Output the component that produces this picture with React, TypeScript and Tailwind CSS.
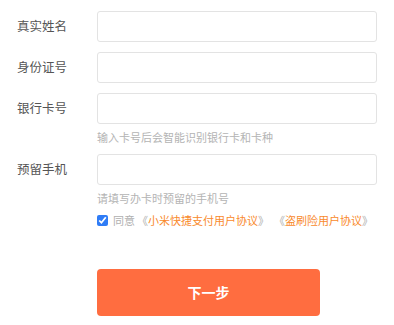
import { useState } from 'react';

const FONT = '"Noto Sans CJK SC", "Noto Sans", sans-serif';

interface FieldProps {
  label: string;
  hint?: string;
}

function Field({ label, hint }: FieldProps) {
  return (
    <div className="flex flex-col">
      <div className="flex items-center">
        <span className="w-[97px] shrink-0 pl-[17px] text-[12.5px] text-[#555]">{label}</span>
        <input className="h-[31px] w-[280px] rounded-[3px] border border-[#e3e3e3] bg-white outline-none" />
      </div>
      {hint && <p className="ml-[97px] mt-[5px] text-[11px] leading-[16px] text-[#b4b4b4]">{hint}</p>}
    </div>
  );
}

export default function App() {
  const [agreed, setAgreed] = useState(true);

  return (
    <div className="h-[325px] w-[394px] bg-white pt-[11px]" style={{ fontFamily: FONT }}>
      <div className="flex flex-col gap-[10px]">
        <Field label="真实姓名" />
        <Field label="身份证号" />
        <Field label="银行卡号" hint="输入卡号后会智能识别银行卡和卡种" />
      </div>
      <div className="mt-[9px]">
        <Field label="预留手机" hint="请填写办卡时预留的手机号" />
      </div>
      <label className="ml-[97px] mt-[6px] flex items-center text-[11px] leading-[16px] text-[#b0b0b0]">
        <input
          type="checkbox"
          checked={agreed}
          onChange={(e) => setAgreed(e.target.checked)}
          className="mr-[5px] h-[11px] w-[11px] accent-[#2f7cf6]"
        />
        <span>同意</span>
        <span className="ml-[2px]">《</span>
        <span className="text-[#f98a2c]">小米快捷支付用户协议</span>
        <span>》</span>
        <span className="ml-[5px]">《</span>
        <span className="text-[#f98a2c]">盗刷险用户协议</span>
        <span>》</span>
      </label>
      <button
        type="button"
        className="ml-[97px] mt-[41px] flex h-[47px] w-[223px] items-center justify-center rounded-[4px] bg-[#ff6d40] text-[14px] font-bold text-white"
      >
        下一步
      </button>
    </div>
  );
}
